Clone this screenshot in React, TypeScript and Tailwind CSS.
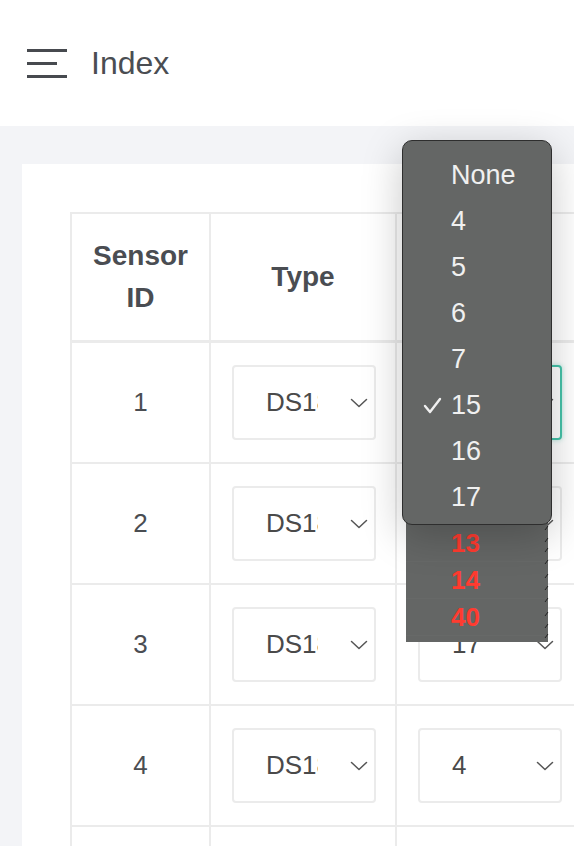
import type { ReactNode } from "react";

const rows = [
  { id: 1, type: "DS18B20", pin: "15", focused: true },
  { id: 2, type: "DS18B20", pin: "16", focused: false },
  { id: 3, type: "DS18B20", pin: "17", focused: false },
  { id: 4, type: "DS18B20", pin: "4", focused: false },
  { id: 5, type: "DS18B20", pin: "5", focused: false },
];

const options = ["None", "4", "5", "6", "7", "15", "16", "17"];
const extraOptions = ["13", "14", "40"];

function Chevron() {
  return (
    <svg width="18" height="10" viewBox="0 0 18 10" fill="none" aria-hidden="true">
      <polyline
        points="1.5,1.5 9,8.5 16.5,1.5"
        stroke="#555"
        strokeWidth="1.5"
        strokeLinecap="round"
        strokeLinejoin="round"
      />
    </svg>
  );
}

function Select({
  value,
  focused,
  clip,
}: {
  value: string;
  focused?: boolean;
  clip?: boolean;
}) {
  return (
    <div
      className={`flex h-[75px] w-[144px] items-center justify-between rounded-[4px] border-2 bg-white pr-[6px] ${
        focused
          ? "border-[#45c3a9] shadow-[0_0_5px_rgba(69,195,169,0.45)]"
          : "border-[#ebebeb]"
      }`}
    >
      <span
        className={`pl-[32px] text-[26px] text-[#4a4a4a] ${
          clip ? "w-[84px] overflow-hidden whitespace-nowrap" : ""
        }`}
      >
        {value}
      </span>
      <Chevron />
    </div>
  );
}

function Cell({ width, children }: { width: string; children: ReactNode }) {
  return (
    <div className={`flex shrink-0 items-center border-r-2 border-[#ebebeb] ${width}`}>
      {children}
    </div>
  );
}

export default function App() {
  return (
    <div className="relative h-[846px] w-[574px] overflow-hidden bg-[#f3f4f7] font-['Liberation_Sans',Arial,sans-serif] text-[#4a4d52]">
      <header className="flex h-[126px] items-center bg-white pl-[27px]">
        <div className="flex w-[40px] flex-col gap-[10px]">
          <span className="h-[3px] w-[40px] bg-[#474a4f]" />
          <span className="h-[3px] w-[30px] bg-[#474a4f]" />
          <span className="h-[3px] w-[40px] bg-[#474a4f]" />
        </div>
        <h1 className="ml-[24px] text-[32px] leading-none">Index</h1>
      </header>

      <main className="pl-[22px] pt-[38px]">
        <div className="w-[620px] bg-white pl-[48px] pt-[48px]">
          <div className="border-l-2 border-t-2 border-[#ebebeb]">
            <div className="flex h-[129px] border-b-[3px] border-[#ebebeb] text-[28px] font-bold leading-[42px]">
              <Cell width="w-[139px] justify-center text-center">
                <span>
                  Sensor
                  <br />
                  ID
                </span>
              </Cell>
              <Cell width="w-[186px] justify-center">Type</Cell>
              <Cell width="w-[190px] justify-center">Pin</Cell>
            </div>

            {rows.map((row) => (
              <div key={row.id} className="flex h-[121px] border-b-2 border-[#ebebeb]">
                <Cell width="w-[139px] justify-center">
                  <span className="text-[26px]">{row.id}</span>
                </Cell>
                <Cell width="w-[186px] pl-[21px]">
                  <div className="w-[143px]">
                    <Select value={row.type} clip />
                  </div>
                </Cell>
                <Cell width="w-[190px] pl-[21px]">
                  <Select value={row.pin} focused={row.focused} />
                </Cell>
              </div>
            ))}
          </div>
        </div>
      </main>

      {/* leftover strip of the native popup */}
      <div className="absolute left-[406px] top-[518px] z-10 h-[124px] w-[142px] bg-[#646665] pt-[7px]">
        {extraOptions.map((opt) => (
          <div
            key={opt}
            className="flex h-[37px] items-center border-b border-[#676968] pl-[45px] text-[26px] font-bold text-[#ff3b30]"
          >
            {opt}
          </div>
        ))}
        <svg
          className="absolute right-[-2px] top-0"
          width="6"
          height="124"
          viewBox="0 0 6 124"
          aria-hidden="true"
        >
          {[8, 20, 30, 42, 56, 68, 80, 94, 106, 116].map((y) => (
            <line key={y} x1="1" y1={y + 4} x2="4" y2={y} stroke="#222" strokeWidth="1" />
          ))}
        </svg>
      </div>

      {/* open select popup */}
      <div className="absolute left-[402px] top-[140px] z-20 h-[385px] w-[150px] rounded-[10px] border border-[#2e2e2e] bg-[#646665] pt-[11px] shadow-[0_10px_40px_rgba(0,0,0,0.22)]">
        {options.map((opt) => (
          <div key={opt} className="relative flex h-[46px] items-center pl-[48px] text-[27px] text-[#f0f0f0]">
            {opt === "15" && (
              <svg
                className="absolute left-[20px] top-[15px]"
                width="19"
                height="17"
                viewBox="0 0 19 17"
                fill="none"
                aria-hidden="true"
              >
                <polyline
                  points="2,9 7,15 17,2"
                  stroke="#f0f0f0"
                  strokeWidth="2.4"
                  strokeLinecap="round"
                  strokeLinejoin="round"
                />
              </svg>
            )}
            {opt}
          </div>
        ))}
      </div>
    </div>
  );
}
